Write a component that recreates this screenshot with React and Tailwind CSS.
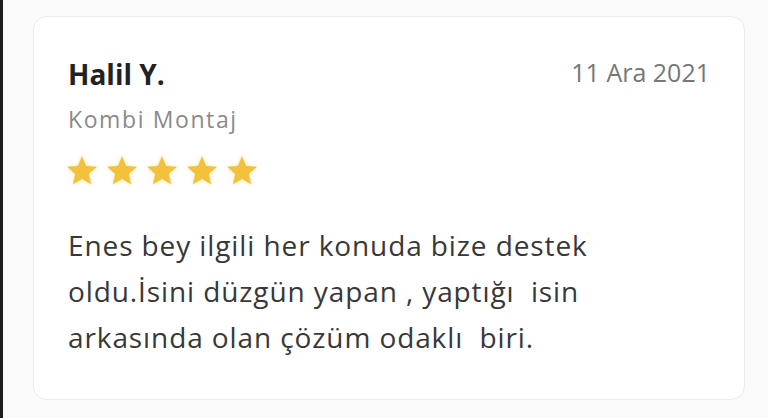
const stars = [0, 1, 2, 3, 4]

function Star() {
  return (
    <svg viewBox="0 0 24 24" className="w-9 h-9 text-[#f4c13c] drop-shadow-[0_0_2px_rgba(244,193,60,0.45)]" fill="currentColor">
      <path d="M12 17.27L18.18 21l-1.64-7.03L22 9.24l-7.19-.61L12 2 9.19 8.63 2 9.24l5.46 4.73L5.82 21z" />
    </svg>
  )
}

export default function App() {
  return (
    <div className="flex w-[768px] h-[418px] bg-[#fafafa] font-['Open_Sans',sans-serif] overflow-hidden">
      <div className="w-[3px] bg-[#1c1c1c]" />
      <div className="flex-1 pl-[30px] pr-[23px] pt-4">
        <div className="h-[384px] bg-white border border-[#ebebeb] rounded-[14px] px-[34px] pt-[38px]">
          <div className="flex items-start justify-between">
            <h3 className="text-[28px] leading-[38px] font-bold text-[#222]">Halil Y.</h3>
            <span className="text-[25px] leading-[34px] text-[#777]">11 Ara 2021</span>
          </div>
          <p className="mt-[10px] text-[23px] leading-[32px] tracking-[1.6px] text-[#8a8a8a]">Kombi Montaj</p>
          <div className="flex gap-1 -ml-1 mt-[18px]">
            {stars.map(i => <Star key={i} />)}
          </div>
          <div className="mt-[33px] text-[28px] leading-[46px] tracking-[0.9px] text-[#383838]">
            <p>Enes bey ilgili her konuda bize destek</p>
            <p>oldu.İsini düzgün yapan , yaptığı&nbsp; isin</p>
            <p>arkasında olan çözüm odaklı&nbsp; biri.</p>
          </div>
        </div>
      </div>
    </div>
  )
}
